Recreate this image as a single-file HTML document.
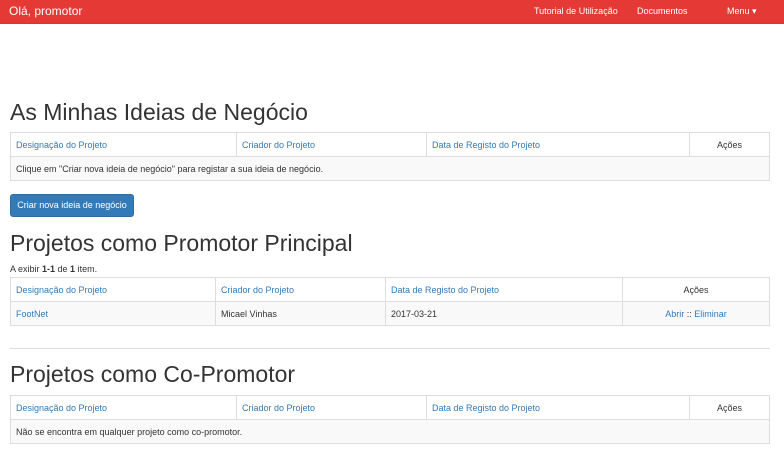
<!DOCTYPE html>
<html><head><meta charset="utf-8"><style>
*{box-sizing:border-box;margin:0;padding:0}
body{width:784px;height:461px;background:#fff;font-family:"Liberation Sans",sans-serif;font-size:9px;color:#333;position:relative;overflow:hidden}
.nav{position:absolute;left:0;top:0;width:784px;height:24px;background:#e53935;border-bottom:1px solid #d33}
.nav span{position:absolute;top:6px;color:#fff;font-size:9px}
.nav .brand{left:9px;top:4px;font-size:12px}
h1{position:absolute;left:10px;font-weight:normal;font-size:23px;color:#333;line-height:1}
table{position:absolute;left:10px;width:760px;border-collapse:collapse;font-size:9px}
td,th{border:1px solid #ddd;height:24px;padding:0 5px;text-align:left;font-weight:normal}
tr{height:24px}
th{color:#337ab7;font-size:9px}
th.a{color:#333;text-align:center}
tr.b td{background:#f9f9f9}
a{color:#337ab7}
.btn{position:absolute;left:10px;top:194px;width:124px;height:23px;background:#337ab7;border:1px solid #2e6da4;border-radius:3px;color:#fff;font-size:9px;text-align:center;line-height:21px}
hr{position:absolute;left:10px;top:348px;width:760px;border:0;border-top:1px solid #ddd}
</style></head><body>
<div class="nav"><span class="brand">Olá, promotor</span><span style="left:534px">Tutorial de Utilização</span><span style="left:637px">Documentos</span><span style="left:727px">Menu ▾</span></div>
<h1 style="top:101px">As Minhas Ideias de Negócio</h1>
<table style="top:132px"><tr><th style="width:226px">Designação do Projeto</th><th style="width:190px">Criador do Projeto</th><th style="width:263px">Data de Registo do Projeto</th><th class="a">Ações</th></tr>
<tr class="b"><td colspan="4">Clique em "Criar nova ideia de negócio" para registar a sua ideia de negócio.</td></tr></table>
<div class="btn">Criar nova ideia de negócio</div>
<h1 style="top:232px">Projetos como Promotor Principal</h1>
<div style="position:absolute;left:10px;top:264px;font-size:9px">A exibir <b>1-1</b> de <b>1</b> item.</div>
<table style="top:277px"><tr><th style="width:205px">Designação do Projeto</th><th style="width:170px">Criador do Projeto</th><th style="width:237px">Data de Registo do Projeto</th><th class="a">Ações</th></tr>
<tr class="b"><td><a>FootNet</a></td><td>Micael Vinhas</td><td>2017-03-21</td><td style="text-align:center"><a>Abrir</a> :: <a>Eliminar</a></td></tr></table>
<hr>
<h1 style="top:363px">Projetos como Co-Promotor</h1>
<table style="top:395px"><tr><th style="width:226px">Designação do Projeto</th><th style="width:190px">Criador do Projeto</th><th style="width:263px">Data de Registo do Projeto</th><th class="a">Ações</th></tr>
<tr class="b"><td colspan="4">Não se encontra em qualquer projeto como co-promotor.</td></tr></table>
</body></html>
